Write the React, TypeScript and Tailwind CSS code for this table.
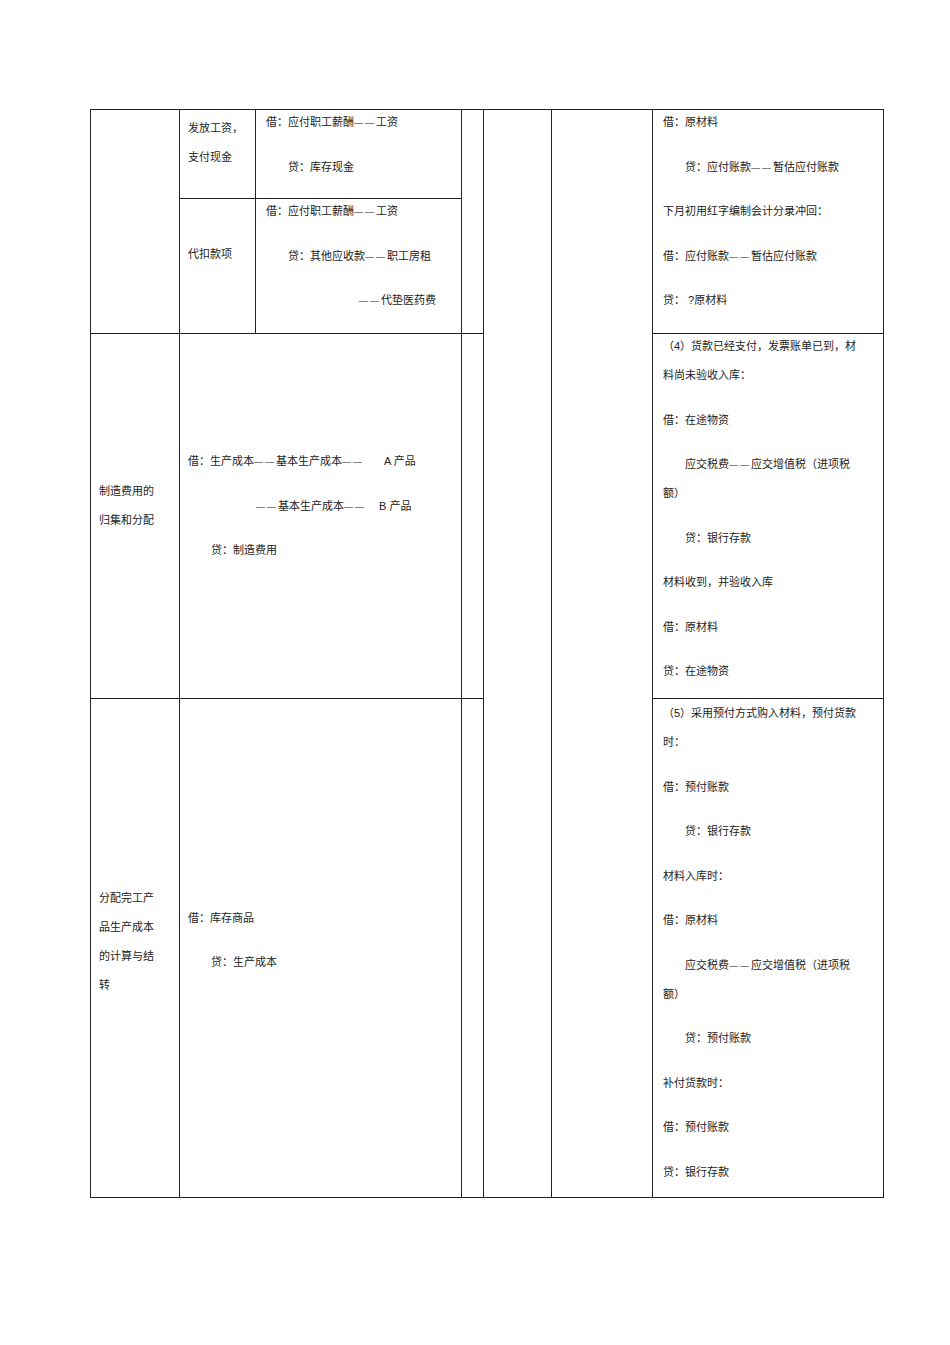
const P = ({
  className = '',
  last = false,
  children,
}: {
  className?: string;
  last?: boolean;
  children: React.ReactNode;
}) => (
  <p className={`leading-[29px] whitespace-nowrap ${last ? 'mb-0' : 'mb-[15.5px]'} ${className}`}>{children}</p>
);

// the double dash in the source reads as two short strokes with a gap
const D = () => <span className="text-[9px] leading-none tracking-[2px]">——</span>;

export default function App() {
  return (
    <div
      className="min-h-[1345px] bg-white pt-[109px] pl-[90px] text-[11px] text-[#222]"
      style={{ fontFamily: '"Liberation Sans", "Noto Sans CJK SC", sans-serif' }}
    >
      <div className="grid w-[794px] grid-cols-[88px_75px_205px_21px_67px_100px_230px] grid-rows-[88px_134px_364px_498px] gap-px bg-[#222] p-px">
        {/* column 1, first block */}
        <div className="col-start-1 row-start-1 row-span-2 bg-white" />

        {/* 发放工资 */}
        <div className="col-start-2 row-start-1 bg-white flex items-center pl-[8px] pb-[23px]">
          <P last>
            发放工资，
            <br />
            支付现金
          </P>
        </div>
        <div className="col-start-3 row-start-1 bg-white pl-[10px]">
          <div className="-mt-[2px]">
            <P>借：应付职工薪酬<D />工资</P>
            <P className="pl-[22px]">贷：库存现金</P>
          </div>
        </div>

        {/* 代扣款项 */}
        <div className="col-start-2 row-start-2 bg-white flex items-center pl-[8px] pb-[23px]">
          <P last>代扣款项</P>
        </div>
        <div className="col-start-3 row-start-2 bg-white pl-[10px]">
          <div className="-mt-[2px]">
            <P>借：应付职工薪酬<D />工资</P>
            <P className="pl-[22px]">贷：其他应收款<D />职工房租</P>
            <P className="pl-[93px]"><D />代垫医药费</P>
          </div>
        </div>

        <div className="col-start-4 row-start-1 row-span-2 bg-white" />
        <div className="col-start-5 row-start-1 row-span-4 bg-white" />
        <div className="col-start-6 row-start-1 row-span-4 bg-white" />

        {/* right column, first block */}
        <div className="col-start-7 row-start-1 row-span-2 bg-white pl-[10px]">
          <div className="-mt-[2px]">
            <P>借：原材料</P>
            <P className="pl-[22px]">贷：应付账款<D />暂估应付账款</P>
            <P>下月初用红字编制会计分录冲回：</P>
            <P>借：应付账款<D />暂估应付账款</P>
            <P>贷： ?原材料</P>
          </div>
        </div>

        {/* 制造费用的归集和分配 */}
        <div className="col-start-1 row-start-3 bg-white flex items-center pl-[8px] pb-[20px]">
          <P last>
            制造费用的
            <br />
            归集和分配
          </P>
        </div>
        <div className="col-start-2 col-span-2 row-start-3 bg-white flex items-center pl-[8px] pb-[4px]">
          <div>
            <P>
              借：生产成本<D />基本生产成本<D />
              <span className="ml-[20px]">A 产品</span>
            </P>
            <P className="pl-[68px]">
              <D />基本生产成本<D />
              <span className="ml-[13px]">B 产品</span>
            </P>
            <P className="pl-[23px]">贷：制造费用</P>
          </div>
        </div>
        <div className="col-start-4 row-start-3 bg-white" />
        <div className="col-start-7 row-start-3 bg-white pl-[10px]">
          <div className="-mt-[2px]">
            <P>
              （4）货款已经支付，发票账单已到，材
              <br />
              料尚未验收入库：
            </P>
            <P>借：在途物资</P>
            <P className="indent-[22px]">
              应交税费<D />应交增值税（进项税
              <br />
              额）
            </P>
            <P className="pl-[22px]">贷：银行存款</P>
            <P>材料收到，并验收入库</P>
            <P>借：原材料</P>
            <P>贷：在途物资</P>
          </div>
        </div>

        {/* 分配完工产品生产成本的计算与结转 */}
        <div className="col-start-1 row-start-4 bg-white flex items-center pl-[8px] pb-[12px]">
          <P last>
            分配完工产
            <br />
            品生产成本
            <br />
            的计算与结
            <br />
            转
          </P>
        </div>
        <div className="col-start-2 col-span-2 row-start-4 bg-white flex items-center pl-[8px]">
          <div>
            <P>借：库存商品</P>
            <P className="pl-[23px]">贷：生产成本</P>
          </div>
        </div>
        <div className="col-start-4 row-start-4 bg-white" />
        <div className="col-start-7 row-start-4 bg-white pl-[10px]">
          <div>
            <P>
              （5）采用预付方式购入材料，预付货款
              <br />
              时：
            </P>
            <P>借：预付账款</P>
            <P className="pl-[22px]">贷：银行存款</P>
            <P>材料入库时：</P>
            <P>借：原材料</P>
            <P className="indent-[22px]">
              应交税费<D />应交增值税（进项税
              <br />
              额）
            </P>
            <P className="pl-[22px]">贷：预付账款</P>
            <P>补付货款时：</P>
            <P>借：预付账款</P>
            <P>贷：银行存款</P>
          </div>
        </div>
      </div>
    </div>
  );
}
